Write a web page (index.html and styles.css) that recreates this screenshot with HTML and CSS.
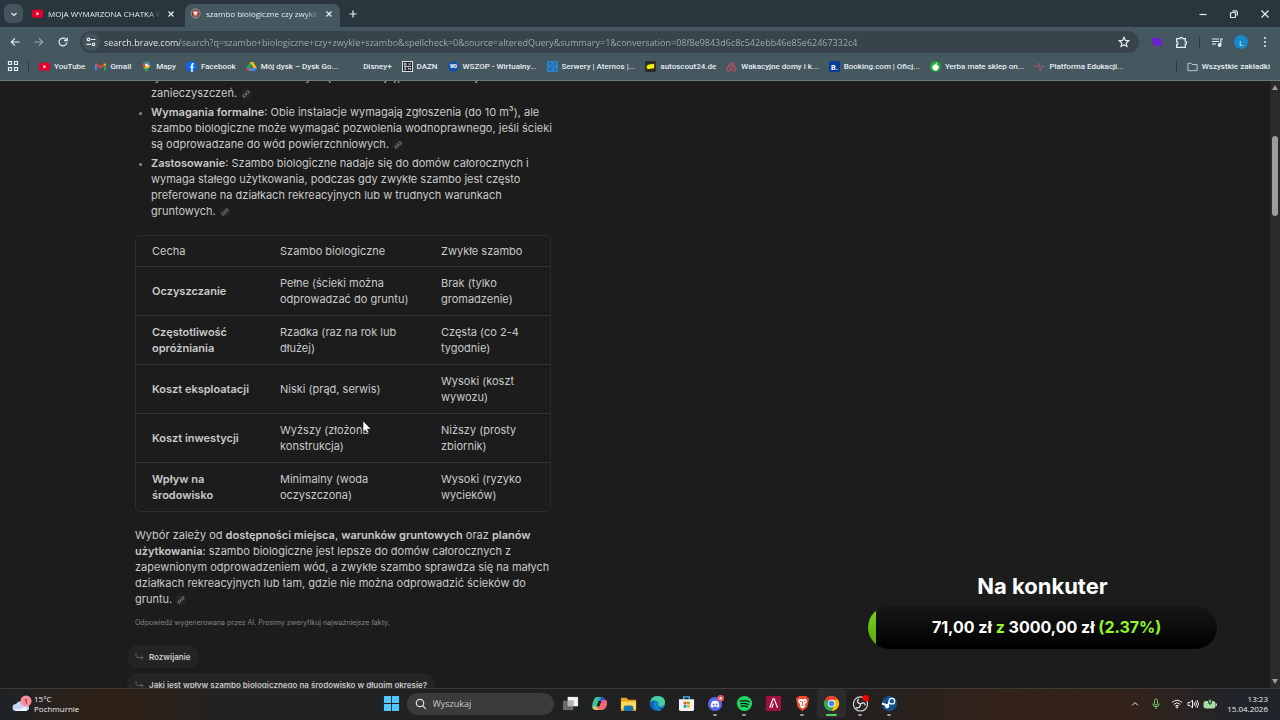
FILE: index.html
```html
<!DOCTYPE html>
<html lang="pl">
  <head>
    <meta charset="UTF-8" />
    <meta name="viewport" content="width=device-width, initial-scale=1.0" />
    <title>szambo biologiczne czy zwykle szambo</title>
    <link rel="stylesheet" href="styles.css" />
  </head>
  <body>
    <header class="browser">
      <div class="tab-strip">
        <button type="button" class="tab-search" aria-label="Szukaj kart">
          <svg width="8" height="8" viewBox="0 0 8 8"><path d="M1.5 3 4 5.5 6.5 3" /></svg>
        </button>
        <div class="tab">
          <svg class="icon" viewBox="0 0 12 12"><rect x="0" y="2" width="12" height="8.500" rx="2" fill="#e8002d" /><path d="M5 4.300v4l3-2z" fill="#fff" /></svg>
          <span class="tab-title">MOJA WYMARZONA CHATKA W LESIE</span>
          <button type="button" class="close" aria-label="Zamknij kartę"><svg width="8" height="8" viewBox="0 0 8 8"><path d="M1.500 1.500l5 5M6.500 1.500l-5 5" /></svg></button>
        </div>
        <div class="tab active">
          <svg class="icon" viewBox="0 0 12 12"><circle cx="6" cy="6" r="5" fill="#514a50" stroke="#a8a3a7" /><path d="M3.500 3h5l.7 2L8 8.500 6 10 4 8.500 2.800 5z" fill="#f06a55" /><path d="M5 4h2l1 1-1 1.500L6 8 5 6.500 4 5z" fill="#fff" /></svg>
          <span class="tab-title">szambo biologiczne czy zwykle szambo</span>
          <button type="button" class="close" aria-label="Zamknij kartę"><svg width="8" height="8" viewBox="0 0 8 8"><path d="M1.500 1.500l5 5M6.500 1.500l-5 5" /></svg></button>
        </div>
        <button type="button" class="new-tab" aria-label="Nowa karta"><svg width="10" height="10" viewBox="0 0 10 10"><path d="M5 1.500v7M1.500 5h7" /></svg></button>
        <div class="window-buttons">
          <button type="button" aria-label="Minimalizuj"><svg width="10" height="10" viewBox="0 0 10 10"><path d="M1.500 5.500h7" /></svg></button>
          <button type="button" aria-label="Przywróć"><svg width="10" height="10" viewBox="0 0 10 10"><rect x="1.500" y="3.500" width="5" height="5" rx="1" /><path d="M3.500 1.800h3.300q1.500 0 1.500 1.500v3.200" /></svg></button>
          <button type="button" aria-label="Zamknij"><svg width="10" height="10" viewBox="0 0 10 10"><path d="M1.500 1.500l7 7M8.500 1.500l-7 7" /></svg></button>
        </div>
      </div>

      <div class="toolbar">
        <button type="button" aria-label="Wstecz"><svg width="12" height="12" viewBox="0 0 12 12"><path d="M10.500 6h-8M6 2.300 2.300 6 6 9.700" /></svg></button>
        <button type="button" class="dim" aria-label="Dalej"><svg width="12" height="12" viewBox="0 0 12 12"><path d="M1.500 6h8M6 2.300 9.700 6 6 9.700" /></svg></button>
        <button type="button" aria-label="Odśwież"><svg width="12" height="12" viewBox="0 0 12 12"><path d="M9.800 6.500A3.900 3.900 0 1 1 8.800 3.300L10 4.500M10.200 1.500v3.200H7" /></svg></button>
        <div class="omnibox">
          <button type="button" class="site-info" aria-label="Informacje o witrynie"><svg width="12" height="12" viewBox="0 0 12 12"><circle cx="3.500" cy="3.500" r="1.300" /><circle cx="8.500" cy="8.300" r="1.300" /><path d="M6 3.500h4.500M1.500 8.300H6" /></svg></button>
          <input type="text" class="url" aria-label="Adres" value="search.brave.com/search?q=szambo+biologiczne+czy+zwykle+szambo&amp;spellcheck=0&amp;source=alteredQuery&amp;summary=1&amp;conversation=08f8e9843d6c8c542ebb46e85e62467332c4" />
          <button type="button" class="star" aria-label="Dodaj zakładkę"><svg width="12" height="12" viewBox="0 0 12 12"><path d="M6 1.300l1.400 3.100 3.300.4-2.500 2.300.7 3.300L6 8.700l-2.900 1.700.7-3.300L1.300 4.800l3.300-.4z" /></svg></button>
        </div>
        <div class="tools">
          <button type="button" aria-label="Rozszerzenie"><svg width="12" height="12" viewBox="0 0 12 12"><path d="M1 2h9v3h1v5H8V8L5 10H1l2-3-2-2z" fill="#6d1ed0" stroke="none" /></svg></button>
          <button type="button" aria-label="Rozszerzenia"><svg width="13" height="13" viewBox="0 0 12 12"><path d="M1.500 2.500h3c0-1.700 2.400-1.700 2.400 0h2.600v2.600c1.700 0 1.700 2.400 0 2.400v3h-8V8c1.600 0 1.600-2.500 0-2.500z" /></svg></button>
          <span class="divider"></span>
          <button type="button" aria-label="Multimedia"><svg width="13" height="13" viewBox="0 0 13 13"><path d="M1 3h7M1 5.500h7M1 8h4M9.800 8.500V3H12" /><circle cx="8.600" cy="9" r="1.300" fill="#fff" /></svg></button>
          <button type="button" class="avatar" aria-label="Profil">L</button>
          <button type="button" aria-label="Menu"><svg width="12" height="12" viewBox="0 0 12 12"><g fill="#e8eef0" stroke="none"><circle cx="6" cy="2" r="1" /><circle cx="6" cy="6" r="1" /><circle cx="6" cy="10" r="1" /></g></svg></button>
        </div>
      </div>

      <nav class="bookmarks">
        <button type="button" class="apps" aria-label="Aplikacje"><svg width="12" height="12" viewBox="0 0 12 12"><path d="M1.500 1.500h3v3h-3zM7.500 1.500h3v3h-3zM1.500 7.500h3v3h-3zM7.500 7.500h3v3h-3z" /></svg></button>
        <span class="divider"></span>
        <a href="#"><svg class="icon" viewBox="0 0 12 12"><rect x="0" y="2" width="12" height="8.500" rx="2" fill="#e8002d" /><path d="M5 4.300v4l3-2z" fill="#fff" /></svg>YouTube</a>
        <a href="#"><svg class="icon" viewBox="0 0 12 12"><path d="M1 10V3" stroke="#4285f4" stroke-width="2" /><path d="M1 3l5 4" stroke="#ea4335" stroke-width="2" /><path d="M6 7l5-4" stroke="#ea4335" stroke-width="2" /><path d="M11 3v2" stroke="#fbbc04" stroke-width="2" /><path d="M11 5v5" stroke="#34a853" stroke-width="2" /></svg>Gmail</a>
        <a href="#"><svg class="icon" viewBox="0 0 12 12"><path d="M6 12C5.500 9 2 8 2 4.500A4 4 0 0 1 6 .5z" fill="#34a853" /><path d="M6 12c.5-3 4-4 4-7.500A4 4 0 0 0 6 .5z" fill="#4285f4" /><path d="M2 5a4 4 0 0 1 1.500-3.600L6 4 3 7.500z" fill="#ea4335" /><path d="M3 7.500 8.500 4 10 5 6 11z" fill="#fbbc04" /><path d="M3 7.500 6 12 8 7.500z" fill="#34a853" /><circle cx="6" cy="4.500" r="1.400" fill="#fff" /></svg>Mapy</a>
        <a href="#"><svg class="icon" viewBox="0 0 12 12"><circle cx="6" cy="6" r="5.800" fill="#0866ff" /><path d="M8.500 3H7.700Q6.500 3 6.500 4.300V12M4.500 6.500h3.700" stroke="#fff" stroke-width="1.700" fill="none" /></svg>Facebook</a>
        <a href="#"><svg class="icon" viewBox="0 0 12 12"><path d="M4.200 1h3.600L3 10.500 0 8z" fill="#1fa463" /><path d="M4.200 1h3.600L12 8H8.300z" fill="#ffba00" /><path d="M3.700 7.500H12L10 11H2z" fill="#4285f4" /><path d="M0 8l3.500-.5L4 11H2z" fill="#ea4335" /></svg>Mój dysk – Dysk Go...</a>
        <a href="#"><svg class="icon" viewBox="0 0 12 12"><path d="M3 3q4 0 5 3t-3 4" fill="none" stroke="#3c6268" /></svg>Disney+</a>
        <a href="#"><svg class="icon" viewBox="0 0 12 12"><rect x=".5" y=".5" width="11" height="11" fill="#182126" stroke="#e8eef0" /><path d="M2.500 2.500h2v2h-2zM7 2.500l2.500 2M9.500 2.500 7 4.500M2.500 7.500h2l-2 2h2M7 9.500v-2l2.500 2v-2M2 6h8" fill="none" stroke="#fff" stroke-width=".8" /></svg>DAZN</a>
        <a href="#"><svg class="icon" viewBox="0 0 12 12"><circle cx="6" cy="6" r="5.800" fill="#174fa8" /><text x="6" y="8" class="wd">WD</text></svg>WSZOP - Wirtualny...</a>
        <a href="#"><svg class="icon" viewBox="0 0 12 12"><rect width="12" height="12" fill="#2a83c4" /><path d="M2 2h2v2H2zM8 2h2v2H8zM5 4h2v1H5zM4 6h1v2H4zM7 6h1v2H7zM2 8h2v2H2zM8 8h2v2H8z" fill="#1c5f94" /></svg>Serwery | Aternos |...</a>
        <a href="#"><svg class="icon" viewBox="0 0 12 12"><rect width="12" height="12" rx="1.500" fill="#292a24" /><path d="M3 4l7-1v5l-8 1 1-2H1z" fill="#f5f200" /></svg>autoscout24.de</a>
        <a href="#"><svg class="icon" viewBox="0 0 12 12"><path d="M6 9C3 6 4.500 4.500 6 4.500S9 6 6 9q-3 3-4.700 1.500T5 2q1-2 2 0l3.500 7c.5 3-2.500 2.500-4.500 0z" fill="none" stroke="#f04a62" /></svg>Wakacyjne domy i k...</a>
        <a href="#"><svg class="icon" viewBox="0 0 12 12"><rect width="12" height="12" rx="2" fill="#073b9a" /><text x="6" y="9.500" class="booking">B.</text></svg>Booking.com | Oficj...</a>
        <a href="#"><svg class="icon" viewBox="0 0 12 12"><circle cx="6" cy="6" r="5.800" fill="#22b336" /><path d="M6 4.500c4-1 4 5.500 0 5.500S2 3.500 6 4.500zM6 4.500 7.500 2" fill="#fff" stroke="#fff" /></svg>Yerba mate sklep on...</a>
        <a href="#"><svg class="icon" viewBox="0 0 12 12"><path d="M0 6h4l1-4 2 9 1-5h4" fill="none" stroke="#a85768" /></svg>Platforma Edukacji...</a>
        <span class="divider push"></span>
        <a href="#" class="all-bookmarks"><svg class="icon" viewBox="0 0 12 12"><path d="M1 2.500h3.500l1 1.300H11v6.700H1z" fill="none" stroke="#c6d0d4" /></svg>Wszystkie zakładki</a>
      </nav>
    </header>

    <main class="page">
      <article class="answer">
        <ul class="points">
          <li>tylko w warunkach beztlenowych (fermentacja), co nie eliminuje zanieczyszczeń. <a href="#" class="source" aria-label="Źródło"><svg width="8" height="8" viewBox="0 0 8 8"><use href="#link" /></svg></a></li>
          <li><strong>Wymagania formalne</strong>: Obie instalacje wymagają zgłoszenia (do 10 m³), ale szambo biologiczne może wymagać pozwolenia wodnoprawnego, jeśli ścieki są odprowadzane do wód powierzchniowych. <a href="#" class="source" aria-label="Źródło"><svg width="8" height="8" viewBox="0 0 8 8"><use href="#link" /></svg></a></li>
          <li><strong>Zastosowanie</strong>: Szambo biologiczne nadaje się do domów całorocznych i wymaga stałego użytkowania, podczas gdy zwykłe szambo jest często preferowane na działkach rekreacyjnych lub w trudnych warunkach gruntowych. <a href="#" class="source" aria-label="Źródło"><svg width="8" height="8" viewBox="0 0 8 8"><use href="#link" /></svg></a></li>
        </ul>

        <table class="compare">
          <thead>
            <tr><th scope="col">Cecha</th><th scope="col">Szambo biologiczne</th><th scope="col">Zwykłe szambo</th></tr>
          </thead>
          <tbody>
            <tr><th scope="row">Oczyszczanie</th><td>Pełne (ścieki można odprowadzać do gruntu)</td><td>Brak (tylko gromadzenie)</td></tr>
            <tr><th scope="row">Częstotliwość opróżniania</th><td>Rzadka (raz na rok lub dłużej)</td><td>Częsta (co 2-4 tygodnie)</td></tr>
            <tr><th scope="row">Koszt eksploatacji</th><td>Niski (prąd, serwis)</td><td>Wysoki (koszt wywozu)</td></tr>
            <tr><th scope="row">Koszt inwestycji</th><td>Wyższy (złożona konstrukcja)</td><td>Niższy (prosty zbiornik)</td></tr>
            <tr><th scope="row">Wpływ na środowisko</th><td>Minimalny (woda oczyszczona)</td><td>Wysoki (ryzyko wycieków)</td></tr>
          </tbody>
        </table>

        <p class="summary">Wybór zależy od <strong>dostępności miejsca</strong>, <strong>warunków gruntowych</strong> oraz <strong>planów użytkowania</strong>: szambo biologiczne jest lepsze do domów całorocznych z zapewnionym odprowadzeniem wód, a zwykłe szambo sprawdza się na małych działkach rekreacyjnych lub tam, gdzie nie można odprowadzić ścieków do gruntu. <a href="#" class="source" aria-label="Źródło"><svg width="8" height="8" viewBox="0 0 8 8"><use href="#link" /></svg></a></p>
        <p class="note">Odpowiedź wygenerowana przez AI. Prosimy zweryfikuj najważniejsze fakty.</p>

        <div class="followups">
          <button type="button"><svg width="9" height="9" viewBox="0 0 9 9"><path d="M1 1v2.500q0 2 2 2h5M6 3.500l2 2-2 2" /></svg>Rozwijanie</button>
          <button type="button"><svg width="9" height="9" viewBox="0 0 9 9"><path d="M1 1v2.500q0 2 2 2h5M6 3.500l2 2-2 2" /></svg>Jaki jest wpływ szambo biologicznego na środowisko w długim okresie?</button>
        </div>
      </article>

      <div class="scrollbar">
        <svg width="6" height="5" viewBox="0 0 6 5"><path d="M3 0l3 5H0z" /></svg>
        <span class="thumb"></span>
        <svg width="6" height="5" viewBox="0 0 6 5"><path d="M3 5l3-5H0z" /></svg>
      </div>

      <!-- stream goal widget -->
      <section class="goal">
        <h2>Na konkuter</h2>
        <div class="goal-bar">
          <span class="goal-fill" style="width: 2.37%"></span>
          <span class="goal-text">71,00 zł <em>z</em> 3000,00 zł <em>(2.37%)</em></span>
        </div>
      </section>

      <svg class="cursor" width="10" height="14" viewBox="0 0 10 14"><path d="M1 1v11l2.500-2.300L5 13l1.800-.8L5.300 9H9z" fill="#fff" stroke="#222" stroke-width=".6" /></svg>
    </main>

    <footer class="taskbar">
      <div class="weather">
        <svg width="20" height="18" viewBox="0 0 20 18"><path d="M4 16a3.500 3.500 0 0 1 0-7 5 5 0 0 1 9 0 3.500 3.500 0 0 1 1 7z" fill="#c3d4f6" /><path d="M2 14q6 2 12-3 2 5-1 5H4z" fill="#f1f5ff" /><circle cx="14" cy="6" r="5.500" fill="#ff8a98" /><text x="14" y="9" class="badge">1</text></svg>
        <div><div>15°C</div><div>Pochmurnie</div></div>
      </div>

      <div class="dock">
        <button type="button" class="app" aria-label="Start"><svg viewBox="0 0 18 18"><path d="M1 1h7.500v7.500H1zM9.500 1H17v7.500H9.500zM1 9.500h7.500V17H1zM9.500 9.500H17V17H9.500z" fill="#4cc8fa" /></svg></button>
        <label class="search">
          <svg width="12" height="12" viewBox="0 0 12 12"><circle cx="5" cy="5" r="3.700" /><path d="M7.800 7.800l3 3" /></svg>
          <input type="text" placeholder="Wyszukaj" aria-label="Wyszukaj" />
        </label>
        <button type="button" class="app" aria-label="Widok zadań"><svg viewBox="0 0 18 18"><path d="M6 2h11v10H6z" fill="#f3f3f3" /><path d="M1 6h11v10H1z" fill="#777" opacity=".85" /><path d="M6 6h6v6H6z" fill="#b5b5b5" /></svg></button>
        <button type="button" class="app" aria-label="Copilot"><svg viewBox="0 0 18 18"><path d="M6 2h6L8 14q-1 2-3 2-4 0-4-4 0-3 2-7 1-3 3-3z" fill="#2a9be8" /><path d="M2 11q0-6 4-9l3 1-4 12q-3 1-3-4z" fill="#48c27b" /><path d="M12 2q2 0 2.500 3L9 5z" fill="#1955d4" /><path d="M12 5q5-1 5 3 0 8-6 8H6l3.500-9Q10 5 12 5z" fill="#cf55c8" /><path d="M9 10q3-1 6-5 3 3 1 7t-5 4H6z" fill="#f06a66" /><path d="M2 12q5 0 6 4H5q-3 0-3-4z" fill="#f4c245" /><path d="M8 6h3l-2 6H6z" fill="#202020" /></svg></button>
        <button type="button" class="app" aria-label="Eksplorator plików"><svg viewBox="0 0 18 18"><path d="M1 3h6l2 2h8v12H1z" fill="#e9a51f" /><path d="M1 7h16v8H1z" fill="#ffd95a" /><path d="M4 13q0-2 2-2h6q2 0 2 2v4H4z" fill="#1976b8" /></svg></button>
        <button type="button" class="app" aria-label="Edge"><svg viewBox="0 0 18 18"><circle cx="9" cy="9" r="8" fill="#1687d8" /><path d="M1 10Q1 1 9 1q8 0 8 7 0 4-5 4-3 0-2-2 1-4-3-4-4 0-6 4z" fill="#43cf9d" /><path d="M1 8q2-3 6-2-3 2-2 5 1 5 7 5-4 2-8-1-4-2-3-7z" fill="#1061b0" /><path d="M9 9q-2 4 3 5 2 .5 4-1-1 2-3 2-5-1-4-6z" fill="#202020" /></svg></button>
        <button type="button" class="app" aria-label="Microsoft Store"><svg viewBox="0 0 18 18"><path d="M6 5V2h6v3" fill="none" stroke="#42bff0" stroke-width="1.500" /><path d="M1 4.500h16V15q0 2-2 2H3q-2 0-2-2z" fill="#f3f3f3" /><path d="M6 7h3v3H6z" fill="#f25022" /><path d="M9.500 7h3v3h-3z" fill="#7fba00" /><path d="M6 10.500h3v3H6z" fill="#00a4ef" /><path d="M9.500 10.500h3v3h-3z" fill="#ffb900" /></svg></button>
        <button type="button" class="app running" aria-label="Discord"><svg viewBox="0 0 18 18"><circle cx="8.500" cy="9.500" r="7.500" fill="#5865f2" /><path d="M5.500 6.500q3-1 6 0 2 3 1.500 6l-2 1-.8-1.200H6.800L6 13.500l-2-1q-.5-3 1.500-6z" fill="#fff" /><circle cx="7" cy="10" r="1" fill="#5865f2" /><circle cx="10.200" cy="10" r="1" fill="#5865f2" /><circle cx="14.500" cy="3.500" r="3.500" fill="#e7575e" /><circle cx="14.500" cy="3.500" r="1.300" fill="#ffe4e4" /></svg></button>
        <button type="button" class="app running" aria-label="Spotify"><svg viewBox="0 0 18 18"><circle cx="9" cy="9" r="8" fill="#1ed760" /><path d="M4.500 6.500q5-1.500 9.500.8M5 9.300q4-1.200 8 .8M5.500 12q3.500-1 6.500.6" fill="none" stroke="#121212" stroke-width="1.300" stroke-linecap="round" /></svg></button>
        <button type="button" class="app" aria-label="Aplikacja"><svg viewBox="0 0 18 18"><rect x="1" y="1" width="16" height="16" fill="#a0103d" /><path d="M5 13.500 8.500 4h1.200l3.600 9.500M7.300 13.500 8.800 9" fill="none" stroke="#fff" stroke-width="1.200" /></svg></button>
        <button type="button" class="app running" aria-label="Brave"><svg viewBox="0 0 18 18"><path d="M5 1h8l1.500 1.800L16 3l-.5 3-1.500 7-5 4-5-4-1.500-7L2 3l1.500-.2z" fill="#f04a2a" /><path d="M5.500 4l3.500.5 3.500-.5 1.500 2.500-2.500 3.500L12 12l-3 2.500L6 12l.5-2L4 6.500z" fill="#fff" /><path d="M6 6.500l2 .8M12 6.500l-2 .8M9 7v3.500M7.500 11.500 9 10.500l1.500 1" fill="none" stroke="#f04a2a" /></svg></button>
        <button type="button" class="app running current" aria-label="Chrome"><svg viewBox="0 0 18 18"><path d="M9 9 2 5A8 8 0 0 1 16 5z" fill="#ea4335" /><path d="M9 9V5h7a8 8 0 0 1-7 12z" fill="#fbbc04" /><path d="M9 9l3.500 2L9 17A8 8 0 0 1 2 5z" fill="#34a853" /><circle cx="9" cy="9" r="4" fill="#fff" /><circle cx="9" cy="9" r="3" fill="#4285f4" /></svg></button>
        <button type="button" class="app running" aria-label="OBS"><svg viewBox="0 0 18 18"><circle cx="9" cy="9.500" r="7.500" fill="#25272b" stroke="#d8d8d8" stroke-width="1.200" /><path d="M9 9.500Q4 8 7 4M9 9.500q4-3 5 1.500M9 9.500q0 5-5 4" fill="none" stroke="#e4e4e4" stroke-width="1.400" /><circle cx="14.500" cy="3.500" r="3.500" fill="#f40000" /></svg></button>
        <button type="button" class="app running" aria-label="Steam"><svg viewBox="0 0 18 18"><path d="M1 8A8 8 0 1 1 2 13z" fill="#12518f" /><path d="M1 9l6 2 3-5" fill="none" stroke="#fff" stroke-width="2" /><circle cx="11.500" cy="6.500" r="3" fill="#12518f" stroke="#fff" stroke-width="1.300" /><circle cx="6.500" cy="12" r="2.200" fill="#fff" /></svg></button>
      </div>

      <div class="tray">
        <svg width="10" height="10" viewBox="0 0 10 10"><path d="M2 6.500 5 3.500l3 3" /></svg>
        <svg class="mic" width="10" height="12" viewBox="0 0 10 12"><rect x="3.500" y="1" width="3" height="6" rx="1.500" /><path d="M1.800 5.500q0 3.300 3.200 3.300t3.200-3.300M5 8.800V11" /></svg>
        <div class="status">
          <svg width="12" height="10" viewBox="0 0 12 10"><path d="M1 3.500q5-4.500 10 0M2.700 5.300q3.300-3 6.600 0M4.300 7q1.700-1.400 3.400 0" /><circle cx="6" cy="8.300" r=".7" /></svg>
          <svg width="12" height="10" viewBox="0 0 12 10"><path d="M1 3.500h2L5.500 1v8L3 6.500H1zM7 3.500q1 1.500 0 3M8.500 2.200q2 2.800 0 5.600M10 1q3 4 0 8" /></svg>
          <svg width="14" height="10" viewBox="0 0 14 10"><rect x="1" y="2.500" width="11" height="6.500" rx="1.500" fill="#a7dca6" stroke="#a7dca6" /><path d="M13.300 4.500v2.500" /><path d="M5 0h4v4l-2 2-2-2z" fill="#285032" stroke="none" /><path d="M7 1v3" /></svg>
        </div>
        <div class="clock"><div>13:23</div><div>15.04.2026</div></div>
      </div>
    </footer>

    <svg width="0" height="0" class="defs">
      <defs>
        <g id="link"><path d="M3.500 2.800 5 1.300q1-.8 1.700 0t0 1.700L5.200 4.500M4.500 5.200 3 6.700q-1 .8-1.700 0t0-1.700l1.500-1.500M3 5l2-2" /></g>
      </defs>
    </svg>
  </body>
</html>
```

FILE: styles.css
```css
* {
  box-sizing: border-box;
}
body {
  margin: 0;
  height: 100vh;
  display: flex;
  flex-direction: column;
  overflow: hidden;
  background: #1c1c1c;
  color: #c9c9c9;
  font-family: "Open Sans", "Noto Sans", sans-serif;
  font-size: 8px;
}
button,
input {
  font: inherit;
  color: inherit;
  border: 0;
  padding: 0;
  background: none;
}
button {
  display: flex;
  align-items: center;
  justify-content: center;
}
a {
  color: inherit;
  text-decoration: none;
}
svg {
  flex: none;
}
.defs {
  position: absolute;
}

/* browser chrome */
.browser {
  flex: none;
  background: #455860;
  color: #e6edf0;
  border-bottom: 1px solid #6c7b80;
}
.browser button svg {
  fill: none;
  stroke: currentColor;
  stroke-width: 1.2;
}
.icon {
  width: 11px;
  height: 11px;
}
.divider {
  flex: none;
  width: 1px;
  height: 11px;
  background: #2b3a41;
}
.tab-strip {
  display: flex;
  align-items: center;
  height: 27px;
  padding: 0 0 0 4px;
  background: #29363d;
}
.tab-search {
  width: 19px;
  height: 19px;
  border-radius: 6px;
  background: #43545c;
}
.tab {
  display: flex;
  align-items: center;
  gap: 5px;
  width: 155px;
  height: 23px;
  margin-top: 4px;
  padding: 0 6px 4px 5px;
  border-radius: 7px 7px 0 0;
}
.tab-search + .tab {
  margin-left: 4px;
}
.tab.active {
  background: #455860;
  margin-left: 3px;
}
.tab-title {
  flex: 1;
  overflow: hidden;
  white-space: nowrap;
  font-weight: 500;
  mask-image: linear-gradient(90deg, #000 88%, transparent);
}
.close {
  width: 10px;
  height: 10px;
}
.new-tab {
  width: 20px;
  height: 20px;
  margin-left: 3px;
}
.window-buttons {
  display: flex;
  margin-left: auto;
}
.window-buttons button {
  width: 31px;
  height: 27px;
}
.window-buttons svg {
  stroke-width: 1;
}
.toolbar {
  display: flex;
  align-items: center;
  height: 28px;
  padding: 2px 3px 0;
}
.toolbar > button,
.tools button {
  width: 24px;
  height: 20px;
}
.dim {
  opacity: 0.5;
}
.omnibox {
  flex: 1;
  display: flex;
  align-items: center;
  height: 22px;
  margin-left: 5px;
  padding: 0 9px 0 2px;
  border-radius: 11px;
  background: #37444c;
}
.site-info {
  width: 18px;
  height: 18px;
  border-radius: 50%;
  background: #44535b;
}
.url {
  flex: 1;
  min-width: 0;
  margin-left: 4px;
  font-size: 9px;
  outline: 0;
  color: transparent;
  /* host part brighter than the path */
  background: linear-gradient(90deg, #eef3f5 76px, #a3afb4 76px);
  background-clip: text;
}
.tools {
  display: flex;
  align-items: center;
  margin-left: 6px;
}
.tools .divider {
  margin: 0 5px 0 6px;
}
.tools .avatar {
  width: 14px;
  height: 14px;
  margin: 0 5px;
  border-radius: 50%;
  background: #1687c8;
}
.bookmarks {
  display: flex;
  align-items: center;
  height: 25px;
  padding: 0 10px 3px 7px;
  white-space: nowrap;
  font-family: Roboto, "Open Sans", sans-serif;
  font-weight: 500;
}
.apps {
  width: 12px;
  height: 12px;
  margin-right: 9px;
}
.bookmarks a {
  display: flex;
  align-items: center;
  gap: 4px;
  margin-left: 10px;
}
.push {
  margin-left: auto;
}
.wd,
.booking {
  fill: #fff;
  font-weight: 700;
  font-size: 5px;
  text-anchor: middle;
}
.booking {
  font-size: 8px;
}

/* answer */
.page {
  flex: 1;
  position: relative;
  min-height: 0;
  display: flex;
  justify-content: space-between;
  overflow: hidden;
}
.answer {
  width: 416px;
  margin: -12px 0 0 135px;
  font-family: Inter, "Liberation Sans", sans-serif;
  font-size: 11px;
  line-height: 16px;
}
.answer strong {
  font-weight: 600;
}
.points {
  margin: 0 -8px 16px 0;
  padding-left: 16px;
}
.points li {
  margin-bottom: 3px;
}
.points li::marker {
  color: #8a8a8a;
  font-size: 8px;
}
.source {
  display: inline-flex;
  align-items: center;
  justify-content: center;
  width: 12px;
  height: 12px;
  border-radius: 50%;
  vertical-align: middle;
  background: #222;
}
.source svg {
  fill: none;
  stroke: #a0a0a0;
  stroke-width: 0.8;
}
.compare {
  width: 100%;
  border: 1px solid #2c2c2c;
  border-radius: 5px;
  border-spacing: 0;
  table-layout: fixed;
}
.compare th,
.compare td {
  padding: 8px 8px 8px 16px;
  text-align: left;
  font-weight: 400;
}
.compare thead th {
  padding-top: 7px;
  padding-bottom: 7px;
}
.compare thead th:nth-child(1) {
  width: 128px;
}
.compare thead th:nth-child(2) {
  width: 161px;
}
.compare tbody th {
  font-weight: 600;
}
.compare td:last-child {
  padding-right: 24px;
}
.compare tbody th,
.compare tbody td {
  border-top: 1px solid #343434;
}
.summary {
  margin: 15px 0 8px;
}
.note {
  margin: 0 0 14px;
  color: #858585;
  font-size: 7px;
}
.followups {
  display: flex;
  flex-direction: column;
  align-items: flex-start;
  gap: 5px;
  margin-left: -8px;
}
.followups button {
  gap: 5px;
  height: 23px;
  padding: 0 8px;
  border-radius: 12px;
  background: #242424;
  font-size: 8px;
  font-weight: 600;
  white-space: nowrap;
}
.followups svg {
  fill: none;
  stroke: #5c5c5c;
}
.scrollbar {
  display: flex;
  flex-direction: column;
  align-items: center;
  width: 10px;
  padding: 4px 0;
  background: #2a2a2a;
}
.scrollbar svg {
  fill: #9d9d9d;
}
.thumb {
  width: 6px;
  height: 80px;
  margin: 46px 0 auto;
  border-radius: 3px;
  background: #9d9d9d;
}

/* goal overlay */
.goal {
  position: absolute;
  right: 63px;
  bottom: 39px;
  width: 349px;
  text-align: center;
  font-family: Inter, sans-serif;
  font-weight: 700;
  color: #fff;
}
.goal h2 {
  margin: 0 0 7px;
  font-size: 22px;
  line-height: 26px;
}
.goal-bar {
  display: flex;
  height: 43px;
  border-radius: 22px;
  overflow: hidden;
  background: linear-gradient(#171717, #000);
}
.goal-fill {
  background: linear-gradient(#7ed321, #55a80b);
}
.goal-text {
  flex: 1;
  font-size: 16px;
  line-height: 42px;
}
.goal-text em {
  font-style: normal;
  color: #93f52b;
}
.cursor {
  position: absolute;
  left: 362px;
  top: 339px;
}

/* taskbar */
.taskbar {
  flex: none;
  display: grid;
  grid-template-columns: 1fr auto 1fr;
  align-items: center;
  height: 32px;
  padding-bottom: 2px;
  border-top: 1px solid #3c3a38;
  background: linear-gradient(90deg, #1e2225 0, #302116 8%, #2b2119 12%, #202224 18%, #202020 65%, #33231a 78%, #33221a 88%, #20242a 97%);
  color: #eee;
  line-height: 10px;
}
.weather {
  display: flex;
  align-items: center;
  gap: 2px;
  padding-left: 12px;
}
.badge {
  fill: #3a1a20;
  font-size: 8px;
  text-anchor: middle;
}
.dock {
  display: flex;
  align-items: center;
}
.app {
  width: 29px;
  height: 29px;
  flex-direction: column;
  border-radius: 4px;
}
.app svg {
  width: 17px;
  height: 17px;
}
.running::after {
  content: "";
  width: 4px;
  height: 2px;
  margin: 2px 0 -4px;
  border-radius: 1px;
  background: #999;
}
.current {
  background: #2b2c2b;
}
.current::after {
  width: 11px;
  background: #5bd35b;
}
.search {
  display: flex;
  align-items: center;
  gap: 6px;
  width: 147px;
  height: 22px;
  margin: 0 2px 0 1px;
  padding: 0 8px;
  border-radius: 11px;
  background: #3b3b3b;
}
.search svg {
  fill: none;
  stroke: #e0e0e0;
  stroke-width: 1.2;
}
.search input {
  width: 100%;
  font-size: 9px;
  outline: 0;
}
.search input::placeholder {
  color: #c8c8c8;
}
.tray {
  display: flex;
  align-items: center;
  justify-content: flex-end;
  padding-right: 12px;
}
.tray svg {
  fill: none;
  stroke: #ececec;
}
.tray .mic {
  margin: 0 10px 0 11px;
  stroke: #6ed36a;
}
.status {
  display: flex;
  gap: 4px;
}
.clock {
  margin-left: 10px;
  text-align: right;
}
```
